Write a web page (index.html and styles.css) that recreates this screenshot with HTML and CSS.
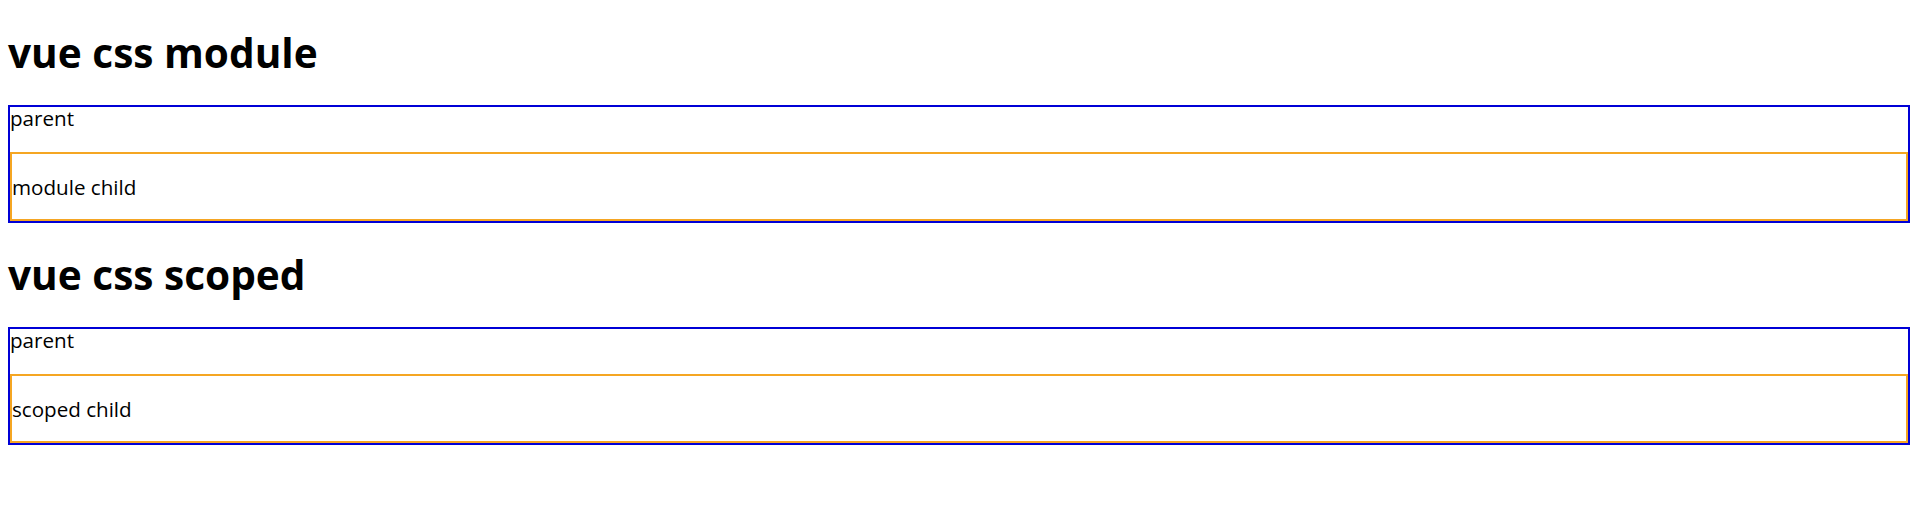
FILE: index.html
```html
<!DOCTYPE html>
<html lang="en">
<head>
<meta charset="utf-8">
<title>vue css</title>
<link rel="stylesheet" href="styles.css">
</head>
<body>
  <section class="demo">
    <h1 class="title">vue css module</h1>
    <div class="parent">
      <div class="parent-label">parent</div>
      <div class="child">module child</div>
    </div>
  </section>
  <section class="demo">
    <h1 class="title">vue css scoped</h1>
    <div class="parent">
      <div class="parent-label">parent</div>
      <div class="child">scoped child</div>
    </div>
  </section>
</body>
</html>
```
FILE: styles.css
```css
html, body {
  background: #ffffff;
}
body {
  margin: 0;
  padding: 1px 8px 0;
  font-family: "Open Sans", "Noto Sans", "Liberation Sans", sans-serif;
  color: #000000;
}
.title {
  margin: 25px 0;
  font-size: 40.6px;
  line-height: 54px;
  font-weight: 700;
}
.parent {
  border: 2px solid #0000d6;
}
.parent-label {
  font-size: 20.6px;
  line-height: 23px;
}
.child {
  margin-top: 22px;
  border: 2px solid #f5a623;
  padding: 20px 0 19px;
  font-size: 20.6px;
  line-height: 26px;
}
```
